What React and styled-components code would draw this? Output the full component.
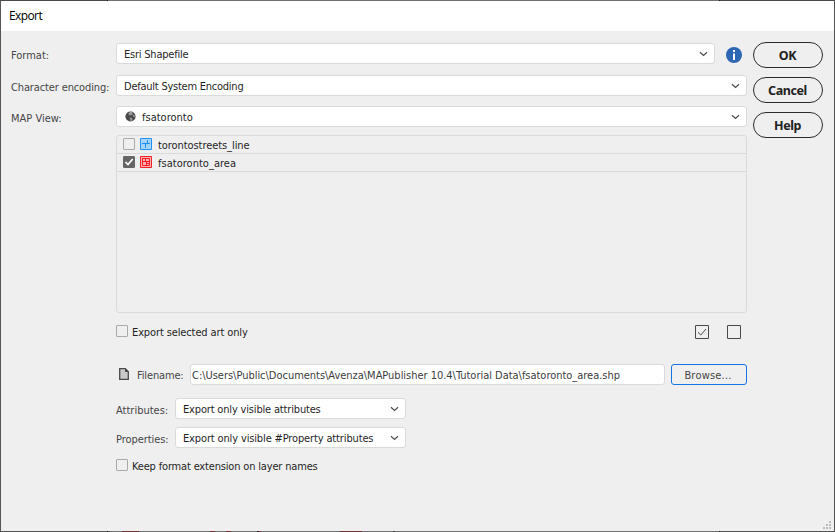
import React from 'react';
import styled, { createGlobalStyle, css } from 'styled-components';

const GlobalStyle = createGlobalStyle`
  * { box-sizing: border-box; }
  body { margin: 0; overflow: hidden; }
`;

const Window = styled.div`
  width: 835px;
  height: 532px;
  padding: 1px;
  display: flex;
  flex-direction: column;
  font: 11px/14px "DejaVu Sans Condensed", "Noto Sans", sans-serif;
  color: #1f1f1f;
  background:
    linear-gradient(90deg, #4b494a 107px, #171717 107px 108px, #717171 108px 719px, #171717 719px 720px, #4b494a 720px) 0 0 / 100% 1px no-repeat,
    linear-gradient(90deg, #555 107px, #171717 107px 108px, #555 108px 110px, #717171 110px 122px, #762e34 122px 139px, #717171 139px 210px,
      #762e34 210px 215px, #717171 215px 226px, #762e34 226px 231px, #717171 231px 257px, #202020 257px 259px, #762e34 259px 261px,
      #717171 261px 340px, #762e34 340px 362px, #717171 362px 393px, #493a3c 393px 395px, #717171 395px 719px, #171717 719px 720px, #555 720px) 0 100% / 100% 1px no-repeat,
    #555;
`;

const TitleBar = styled.header`
  height: 30px;
  flex: none;
  padding: 7px 8px;
  background: #fff;
  color: #000;
  font: 12px/16px "Open Sans", sans-serif;
  letter-spacing: -0.6px;
`;

const Body = styled.main`
  flex: 1;
  position: relative;
  display: flex;
  background: #efefef;
  padding: 11px 11px 0 10px;
`;

const Form = styled.div`
  width: 736px;
  padding-top: 1px;
`;

const Actions = styled.div`
  width: 70px;
  margin-left: 6px;
  display: flex;
  flex-direction: column;
  gap: 9px;
`;

const ActionButton = styled.button`
  height: 26px;
  padding: 1px 1px 0 0;
  border: 1px solid #2b2b2b;
  border-radius: 13px;
  background: transparent;
  color: #222;
  font: bold 12.5px/22px "Noto Sans", sans-serif;
  letter-spacing: -0.4px;
`;

const Text = styled.span`
  white-space: nowrap;
  padding-top: 2px;
  letter-spacing: ${(p) => p.$track || 0}px;
`;

const Label = styled(Text)`
  width: ${(p) => p.$width}px;
  flex: none;
  padding-top: ${(p) => p.$drop ?? 2}px;
  color: #464646;
`;

const Row = styled.div`
  display: flex;
  align-items: center;
  height: 21px;
  margin-top: ${(p) => p.$gap || 0}px;
`;

const box = css`
  height: 21px;
  border: 1px solid #dadada;
  border-radius: 3px;
  background: #fff;
  display: flex;
  align-items: center;
`;

const Select = styled.div`
  ${box}
  width: ${(p) => p.$width}px;
  padding: 0 6px 0 7px;
`;

const Chevron = styled.svg.attrs({ viewBox: '0 0 9 6', children: <path d="M1 1.2 4.5 4.4 8 1.2" /> })`
  width: 9px;
  height: 6px;
  margin-left: auto;
  fill: none;
  stroke: #505050;
  stroke-width: 1.3;
`;

const Globe = styled.svg`
  width: 11px;
  height: 11px;
  margin: 0 6px 1px 1px;
`;

const InfoIcon = styled.svg`
  width: 16px;
  height: 16px;
  margin: 2px 0 0 11px;
`;

const LayerList = styled.div`
  height: 178px;
  margin: 8px 0 0 105px;
  width: 631px;
  border: 1px solid #dadada;
  border-radius: 3px;
`;

const LayerRow = styled.div`
  height: 18px;
  display: flex;
  align-items: flex-start;
  padding: 2px 0 0 6px;
  border-bottom: 1px solid #dadada;
`;

const LayerName = styled(Text)`
  padding-top: 1px;
`;

const LayerIcon = styled.svg`
  width: 12px;
  height: 12px;
  margin: 0 6px 0 5px;
`;

const Check = styled.span`
  width: 12px;
  height: 12px;
  flex: none;
  display: flex;
  border: 1px solid ${(p) => (p.$on ? '#666' : '#a9a9a9')};
  border-radius: 1px;
  background: ${(p) => (p.$on ? '#666' : 'transparent')};
`;

const Tick = styled.svg`
  width: 10px;
  height: 10px;
  fill: none;
  stroke: #fff;
  stroke-width: 1.7;
`;

const CheckRow = styled.div`
  display: flex;
  align-items: flex-start;
  gap: 4px;
  height: 14px;
  margin: ${(p) => p.$gap}px 0 0 105px;
`;

const CheckLabel = styled(Text)`
  padding-top: 1px;
`;

const SelectAllTools = styled.div`
  display: flex;
  gap: 18px;
  margin-left: auto;
  margin-right: 6px;
`;

const ToolBox = styled.svg`
  width: 14px;
  height: 14px;
  fill: none;
  stroke: #4a4a4a;
`;

const FileRow = styled(Row)`
  padding-left: 108px;
  margin-top: 25px;
`;

const FileIcon = styled.svg`
  width: 10px;
  height: 12px;
  margin: 0 8px 1px 0;
`;

const PathField = styled.div`
  ${box}
  width: 475px;
  padding: 0 0 0 1px;
  color: #3c3c3c;
`;

const BrowseButton = styled.button`
  width: 76px;
  height: 21px;
  margin-left: 6px;
  padding: 2px 2px 0 0;
  border: 1px solid #1473e6;
  border-radius: 3px;
  background: transparent;
  color: #464646;
  font: inherit;
  letter-spacing: 0.2px;
`;

const OptionRow = styled(Row)`
  padding-left: 105px;
`;

const Grip = styled.svg`
  position: absolute;
  right: 3px;
  bottom: 2px;
  width: 8px;
  height: 8px;
  fill: #bdbdbd;
`;

function Dropdown({ width, text, track, icon }) {
  return (
    <Select $width={width}>
      {icon}
      <Text $track={track}>{text}</Text>
      <Chevron />
    </Select>
  );
}

const globe = (
  <Globe viewBox="0 0 11 11">
    <circle cx="5.5" cy="5.5" r="5.1" fill="#484848" />
    <path d="M5.3.7 7.8 1 7 2.3l1.3.6-1.2 1.3-1.2-.4-.7 1-1.4-.7L3.5 2zM8.2 4l1.9.3-.4 1.9-1-.3-.9-.8zM4.5 6.2l2.3.8.8 1-1.2 2.2-1 .1-.2-2z" fill="#999" />
  </Globe>
);

export default function App() {
  return (
    <>
      <GlobalStyle />
      <Window>
        <TitleBar>Export</TitleBar>
        <Body>
          <Form>
            <Row>
              <Label $width={105} $drop={4}>Format:</Label>
              <Dropdown width={599} text="Esri Shapefile" track={-0.22} />
              <InfoIcon viewBox="0 0 16 16">
                <circle cx="8" cy="8" r="8" fill="#2d66b3" />
                <path d="M7 3h2v2H7zM7 6.5h2V13H7z" fill="#fff" />
              </InfoIcon>
            </Row>
            <Row $gap={11}>
              <Label $width={105} $track={-0.13} $drop={4}>Character encoding:</Label>
              <Dropdown width={631} text="Default System Encoding" track={-0.24} />
            </Row>
            <Row $gap={10}>
              <Label $width={105} $drop={4}>MAP View:</Label>
              <Dropdown width={631} text="fsatoronto" icon={globe} />
            </Row>
            <LayerList>
              <LayerRow>
                <Check />
                <LayerIcon viewBox="0 0 12 12">
                  <path d="M.5.5h11v11H.5z" fill="#a6d5ff" stroke="#2090f5" />
                  <path d="M2 5.5h8" stroke="#2090f5" strokeWidth="1.2" />
                  <path d="M7.5 2v4M5.5 5v5" stroke="#2090f5" />
                </LayerIcon>
                <LayerName $track={-0.07}>torontostreets_line</LayerName>
              </LayerRow>
              <LayerRow>
                <Check $on>
                  <Tick viewBox="0 0 10 10"><path d="M1.5 5 4 7.6 8.7 2" /></Tick>
                </Check>
                <LayerIcon viewBox="0 0 12 12">
                  <path d="M.5.5h11v11H.5z" fill="#ffb0b0" stroke="#f51f25" />
                  <path d="M2.5 2.5h7v7h-7zM2.5 5.5h7M5.5 2.5v3M6.5 5.5v4M6.5 7.5h3" fill="none" stroke="#f51f25" />
                </LayerIcon>
                <LayerName $track={0.02}>fsatoronto_area</LayerName>
              </LayerRow>
            </LayerList>
            <CheckRow $gap={12}>
              <Check />
              <CheckLabel $track={-0.12}>Export selected art only</CheckLabel>
              <SelectAllTools>
                <ToolBox viewBox="0 0 14 14">
                  <path d="M.5.5h13v13H.5z" />
                  <path d="M3 7.3 5.8 10 11 4" />
                </ToolBox>
                <ToolBox viewBox="0 0 14 14"><path d="M.5.5h13v13H.5z" /></ToolBox>
              </SelectAllTools>
            </CheckRow>
            <FileRow>
              <FileIcon viewBox="0 0 10 12">
                <path d="M.7.7h5.6l3 3v7.6H.7z" fill="#c9c9c9" stroke="#4a4a4a" strokeWidth="1.3" />
                <path d="M6 0v4h4z" fill="#4a4a4a" />
              </FileIcon>
              <Label $width={53} $track={-0.15}>Filename:</Label>
              <PathField>
                <Text $track={-0.025}>{'C:\\Users\\Public\\Documents\\Avenza\\MAPublisher 10.4\\Tutorial Data\\fsatoronto_area.shp'}</Text>
              </PathField>
              <BrowseButton>Browse...</BrowseButton>
            </FileRow>
            <OptionRow $gap={13}>
              <Label $width={59} $drop={4}>Attributes:</Label>
              <Dropdown width={231} text="Export only visible attributes" track={-0.17} />
            </OptionRow>
            <OptionRow $gap={8}>
              <Label $width={59} $track={-0.06} $drop={4}>Properties:</Label>
              <Dropdown width={231} text="Export only visible #Property attributes" track={-0.14} />
            </OptionRow>
            <CheckRow $gap={11}>
              <Check />
              <CheckLabel $track={-0.17}>Keep format extension on layer names</CheckLabel>
            </CheckRow>
          </Form>
          <Actions>
            <ActionButton>OK</ActionButton>
            <ActionButton>Cancel</ActionButton>
            <ActionButton>Help</ActionButton>
          </Actions>
          <Grip viewBox="0 0 8 8">
            <path d="M6 0h2v2H6zM3 3h2v2H3zM6 3h2v2H6zM0 6h2v2H0zM3 6h2v2H3zM6 6h2v2H6z" />
          </Grip>
        </Body>
      </Window>
    </>
  );
}
